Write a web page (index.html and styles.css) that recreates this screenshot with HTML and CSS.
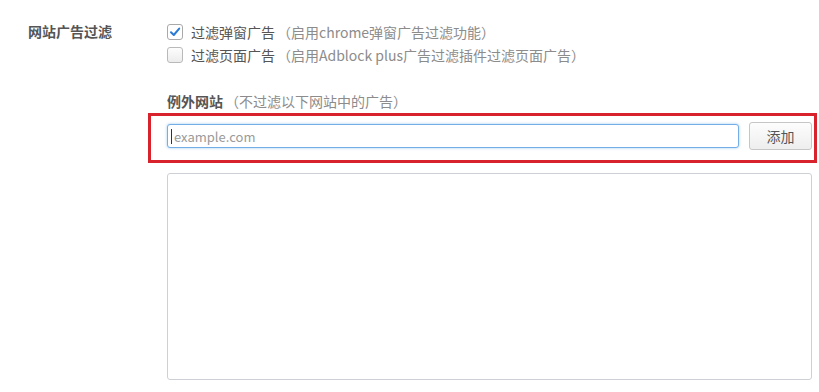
FILE: index.html
```html
<!DOCTYPE html>
<html>
  <head>
    <title>网站广告过滤</title>
    <meta charset="utf-8" />
    <link rel="stylesheet" href="styles.css">
  </head>
  <body>
    <div class="setting">
      <div class="setting-label">网站广告过滤</div>
      <div class="setting-body">
        <label class="option">
          <span class="box checked">
            <svg width="12" height="12" viewBox="0 0 12 12"><path d="M2 6.2 L4.8 9 L10.2 2.6" fill="none" stroke="#2a7bd6" stroke-width="2" stroke-linecap="round" stroke-linejoin="round"/></svg>
          </span>
          <span class="opt-title">过滤弹窗广告</span><span class="opt-note">（启用chrome弹窗广告过滤功能）</span>
        </label>
        <label class="option">
          <span class="box"></span>
          <span class="opt-title">过滤页面广告</span><span class="opt-note">（启用Adblock plus广告过滤插件过滤页面广告）</span>
        </label>

        <div class="section-title"><b>例外网站</b><span class="opt-note">（不过滤以下网站中的广告）</span></div>

        <div class="highlight">
          <div class="add-row">
            <div class="input-wrap">
              <input type="text" class="site-input" placeholder="example.com">
              <span class="caret"></span>
            </div>
            <button type="button" class="btn-add">添加</button>
          </div>
        </div>

        <textarea class="site-list"></textarea>
      </div>
    </div>
  </body>
</html>
```

FILE: styles.css
```css
body {
    margin: 0;
    background-color: #fff;
    font-family: "Noto Sans CJK SC", sans-serif;
    font-size: 14px;
    color: #555;
}

.setting {
    display: flex;
}

.setting-label {
    width: 139px;
    padding-left: 28px;
    padding-top: 20px;
    line-height: 23px;
    font-weight: bold;
    color: #555;
}

.setting-body {
    width: 645px;
    padding-top: 20px;
}

.option {
    display: flex;
    align-items: center;
    height: 23px;
}

.box {
    width: 14px;
    height: 14px;
    border: 1px solid #b9b9b9;
    border-radius: 3px;
    background: linear-gradient(#fdfdfd, #ececec);
    margin-right: 8px;
    display: flex;
    align-items: center;
    justify-content: center;
}

.box.checked {
    background: #fff;
    border-color: #a9a9a9;
}

.opt-title {
    color: #555;
}

.opt-note {
    color: #8c8c8c;
    padding: 0 2px;
}

.section-title {
    margin-top: 24px;
    line-height: 23px;
}

.section-title b {
    color: #555;
}

/* red box around the add row */
.highlight {
    border: 3px solid #d8232c;
    margin: 0 -5px 0 -19px;
    padding: 6px 2px 10px 16px;
}

.add-row {
    display: flex;
    align-items: center;
    height: 28px;
}

.input-wrap {
    flex: 1;
    position: relative;
    margin-right: 10px;
}

.site-input {
    display: block;
    box-sizing: border-box;
    width: 100%;
    height: 24px;
    border: 1px solid #74aee6;
    border-radius: 3px;
    box-shadow: 0 0 3px rgba(102, 170, 233, 0.6);
    padding: 0 6px;
    font-family: "Noto Sans CJK SC", sans-serif;
    font-size: 13px;
    color: #555;
    outline: none;
}

.site-input::placeholder {
    color: #9a9a9a;
}

.caret {
    position: absolute;
    left: 4px;
    top: 5px;
    width: 1px;
    height: 15px;
    background-color: #333;
}

.btn-add {
    box-sizing: border-box;
    width: 63px;
    height: 28px;
    border: 1px solid #c6c6c6;
    border-radius: 3px;
    background: linear-gradient(#fdfdfd, #eeeeee);
    font-family: "Noto Sans CJK SC", sans-serif;
    font-size: 14px;
    color: #555;
    padding: 0;
}

.site-list {
    display: block;
    box-sizing: border-box;
    width: 645px;
    height: 207px;
    margin-top: 10px;
    border: 1px solid #cdd1d6;
    border-radius: 3px;
    resize: none;
}
```
